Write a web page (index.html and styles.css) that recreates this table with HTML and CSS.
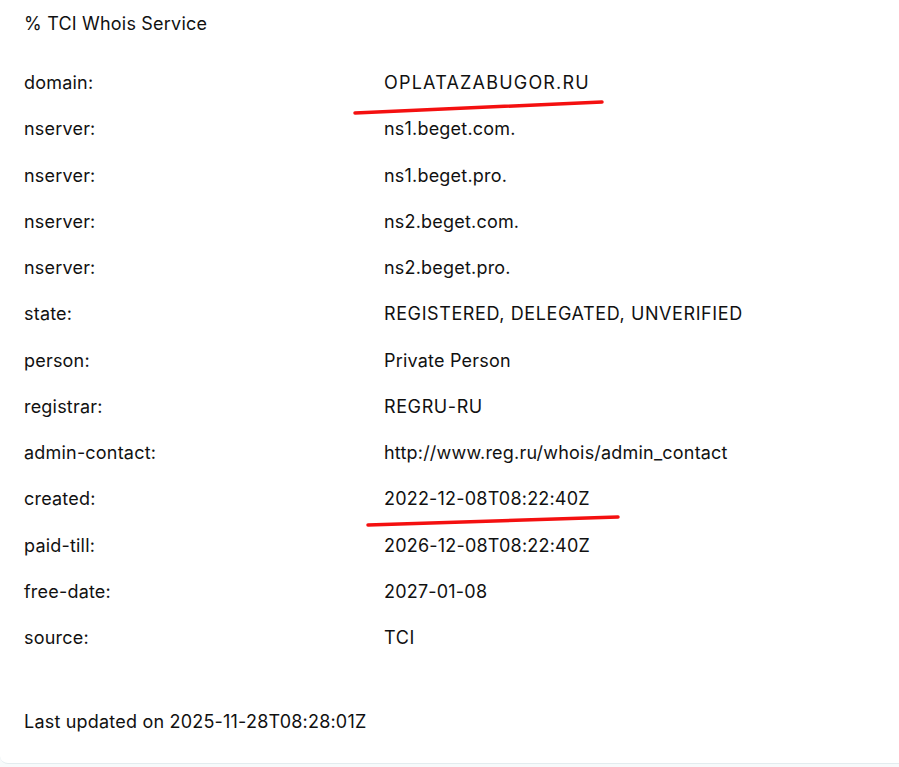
FILE: index.html
```html
<!DOCTYPE html>
<html lang="en">
<head>
<meta charset="utf-8">
<title>TCI Whois Service</title>
<link rel="stylesheet" href="styles.css">
</head>
<body>
<div class="card">
  <div class="title">% TCI Whois Service</div>
  <div class="rows">
    <div class="row"><span class="key">domain:</span><span class="val caps wide">OPLATAZABUGOR.RU</span></div>
    <div class="row"><span class="key">nserver:</span><span class="val">ns1.beget.com.</span></div>
    <div class="row"><span class="key">nserver:</span><span class="val">ns1.beget.pro.</span></div>
    <div class="row"><span class="key">nserver:</span><span class="val">ns2.beget.com.</span></div>
    <div class="row"><span class="key">nserver:</span><span class="val">ns2.beget.pro.</span></div>
    <div class="row"><span class="key">state:</span><span class="val caps">REGISTERED, DELEGATED, UNVERIFIED</span></div>
    <div class="row"><span class="key">person:</span><span class="val">Private Person</span></div>
    <div class="row"><span class="key">registrar:</span><span class="val caps">REGRU-RU</span></div>
    <div class="row"><span class="key">admin-contact:</span><span class="val">http://www.reg.ru/whois/admin_contact</span></div>
    <div class="row"><span class="key">created:</span><span class="val">2022-12-08T08:22:40Z</span></div>
    <div class="row"><span class="key">paid-till:</span><span class="val">2026-12-08T08:22:40Z</span></div>
    <div class="row"><span class="key">free-date:</span><span class="val">2027-01-08</span></div>
    <div class="row"><span class="key">source:</span><span class="val caps">TCI</span></div>
  </div>
  <div class="updated">Last updated on 2025-11-28T08:28:01Z</div>
  <svg class="marks" width="899" height="767" viewBox="0 0 899 767">
    <path d="M355 113 L602 102" stroke="#f41010" stroke-width="3.5" stroke-linecap="round" fill="none"/>
    <path d="M368 525 L618 517" stroke="#f41010" stroke-width="3.5" stroke-linecap="round" fill="none"/>
  </svg>
</div>
</body>
</html>
```

FILE: styles.css
```css
html, body {
  margin: 0;
  padding: 0;
  background: #f7fafb;
}
body {
  font-family: Inter, "Noto Sans", sans-serif;
  font-size: 18px;
  letter-spacing: 0.2px;
  color: #111;
}
.card {
  position: relative;
  background: #fff;
  width: 899px;
  height: 764px;
  box-sizing: border-box;
  border-bottom: 1px solid #e3ecef;
  border-bottom-left-radius: 8px;
  padding: 13px 0 0 24px;
}
.title {
  line-height: 22px;
  height: 22px;
}
.rows {
  margin-top: 24.875px;
}
.row {
  display: flex;
  align-items: center;
  height: 46.25px;
}
.key {
  width: 360px;
  line-height: 22px;
}
.val {
  line-height: 22px;
}
.caps {
  letter-spacing: 0.6px;
}
.wide {
  letter-spacing: 1.2px;
}
.updated {
  margin-top: 50px;
  line-height: 22px;
}
.marks {
  position: absolute;
  left: 0;
  top: 0;
  pointer-events: none;
}
```
